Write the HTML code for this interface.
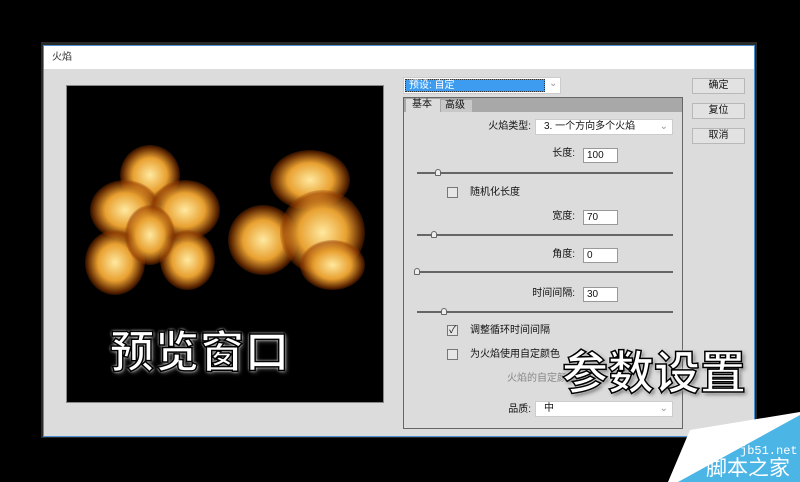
<!DOCTYPE html>
<html><head><meta charset="utf-8"><style>
*{margin:0;padding:0;box-sizing:border-box}
body{width:800px;height:482px;background:#000;position:relative;overflow:hidden;font-family:"Liberation Sans","Noto Sans CJK SC",sans-serif;font-size:10px;line-height:12px;color:#111}
.a{position:absolute}
.dlg{left:41px;top:42px;width:716px;height:396px;background:#2a2a2a}
.inner{left:43px;top:45px;width:712px;height:392px;border:1px solid #4a90d0;background:#dcdcdc}
.title{left:44px;top:46px;width:710px;height:23px;background:#fff;padding:6px 8px;font-size:10px;color:#333}
.btn{width:53px;height:16px;background:#e2e2e2;border:1px solid #b8b8b8;text-align:center;line-height:14px;font-size:10px;left:692px}
.inp{background:#fff;border:1px solid #999;height:15px;width:35px;line-height:13px;padding-left:3px;font-size:10px}
.lbl{text-align:right;width:120px;font-size:10px}
.sl{left:417px;width:256px;height:2px;background:#666}
.th{width:6px;height:7px;background:#eee;border:1px solid #666;border-radius:3px 3px 1px 1px;top:-3px}
.cb{width:11px;height:11px;border:1px solid #777;background:#e6e6e6;left:447px}
.sel{background:#fff;border:1px solid #ccc;height:16px;line-height:14px;padding-left:8px;font-size:10px}
.big{font-weight:bold;color:#fff;-webkit-text-stroke:1.5px #000;text-shadow:0 0 2px #fff,0 0 3px #fff,2px 2px 4px #555;font-family:"Noto Sans CJK SC",sans-serif}
.f{position:absolute;border-radius:50%;background:radial-gradient(ellipse,#ffe9a0 0%,#e8a030 40%,rgba(150,60,0,0.6) 65%,rgba(0,0,0,0) 75%)}
</style></head><body>
<div class="a dlg"></div>
<div class="a inner"></div>
<div class="a title">火焰</div>
<div class="a" style="left:66px;top:85px;width:318px;height:318px;background:#000;border:1px solid #888"></div>
<div class="f" style="left:120px;top:145px;width:60px;height:60px"></div>
<div class="f" style="left:90px;top:180px;width:70px;height:60px"></div>
<div class="f" style="left:150px;top:180px;width:70px;height:60px"></div>
<div class="f" style="left:85px;top:230px;width:60px;height:65px"></div>
<div class="f" style="left:160px;top:230px;width:55px;height:60px"></div>
<div class="f" style="left:125px;top:205px;width:50px;height:60px"></div>
<div class="f" style="left:270px;top:150px;width:80px;height:60px"></div>
<div class="f" style="left:228px;top:205px;width:70px;height:70px"></div>
<div class="f" style="left:280px;top:190px;width:85px;height:85px"></div>
<div class="f" style="left:300px;top:240px;width:65px;height:50px"></div>
<div class="a big" style="left:110px;top:318px;font-size:44px;line-height:60px;letter-spacing:1px">预览窗口</div>
<div class="a" style="left:403px;top:77px;width:158px;height:17px;background:#fff;border:1px solid #ccc"></div>
<div class="a" style="left:405px;top:79px;width:140px;height:13px;background:#3d9cf0;border:1px dotted #333;color:#fff;line-height:11px;padding-left:3px">预设: 自定</div>
<div class="a" style="left:549px;top:78px;color:#999">⌄</div>
<div class="a" style="left:403px;top:97px;width:280px;height:332px;border:1px solid #666;background:#dcdcdc"></div>
<div class="a" style="left:404px;top:98px;width:278px;height:14px;background:#a8a8a8"></div>
<div class="a" style="left:406px;top:99px;width:34px;height:14px;background:#dcdcdc;padding-left:6px;line-height:12px">基本</div>
<div class="a" style="left:441px;top:100px;width:31px;height:12px;background:#c8c8c8;padding-left:4px;line-height:11px">高级</div>
<div class="a lbl" style="left:411px;top:121px">火焰类型:</div>
<div class="a sel" style="left:535px;top:119px;width:138px">3. 一个方向多个火焰<span style="float:right;color:#999;margin-right:4px">⌄</span></div>
<div class="a lbl" style="left:455px;top:148px">长度:</div><div class="a inp" style="left:583px;top:148px">100</div>
<div class="a sl" style="top:172px"><div class="a th" style="left:18px"></div></div>
<div class="a cb" style="top:187px"></div><div class="a" style="left:470px;top:187px">随机化长度</div>
<div class="a lbl" style="left:455px;top:211px">宽度:</div><div class="a inp" style="left:583px;top:210px">70</div>
<div class="a sl" style="top:234px"><div class="a th" style="left:14px"></div></div>
<div class="a lbl" style="left:455px;top:249px">角度:</div><div class="a inp" style="left:583px;top:248px">0</div>
<div class="a sl" style="top:271px"><div class="a th" style="left:-3px"></div></div>
<div class="a lbl" style="left:455px;top:288px">时间间隔:</div><div class="a inp" style="left:583px;top:287px">30</div>
<div class="a sl" style="top:311px"><div class="a th" style="left:24px"></div></div>
<div class="a cb" style="top:325px;font-size:10px;line-height:9px;text-align:center">✓</div><div class="a" style="left:470px;top:325px">调整循环时间间隔</div>
<div class="a cb" style="top:349px"></div><div class="a" style="left:470px;top:349px">为火焰使用自定颜色</div>
<div class="a" style="left:507px;top:373px;color:#888">火焰的自定颜色</div>
<div class="a lbl" style="left:411px;top:404px">品质:</div>
<div class="a sel" style="left:535px;top:401px;width:138px">中<span style="float:right;color:#999;margin-right:4px">⌄</span></div>
<div class="a big" style="left:562px;top:340px;font-size:46px;line-height:60px">参数设置</div>
<div class="a btn" style="top:78px">确定</div>
<div class="a btn" style="top:103px">复位</div>
<div class="a btn" style="top:128px">取消</div>
<svg class="a" style="left:0;top:0" width="800" height="482"><polygon points="668,482 690,430 800,412 800,482" fill="#fff"/><polygon points="678,482 800,415 800,482" fill="#4bb5e6"/></svg>
<div class="a" style="left:740px;top:444px;color:#fff;font-family:'Liberation Mono',monospace;font-size:12px;line-height:14px">jb51.net</div>
<div class="a" style="left:706px;top:457px;color:#fff;font-size:21px;line-height:24px">脚本之家</div>
</body></html>
